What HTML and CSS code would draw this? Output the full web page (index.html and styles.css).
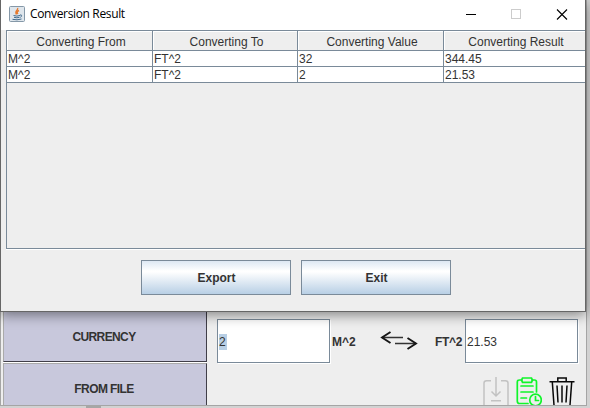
FILE: index.html
```html
<!DOCTYPE html>
<html lang="en">
<head>
<meta charset="utf-8">
<title>Conversion Result</title>
<link rel="stylesheet" href="styles.css">
</head>
<body>
<main class="app">
  <nav class="menu">
    <div class="menu-item">CURRENCY</div>
    <div class="menu-item last">FROM FILE</div>
  </nav>
  <section class="converter">
    <div class="fields">
      <div class="field"><span class="selected">2</span></div>
      <b class="unit from">M^2</b>
      <svg class="swap" width="38" height="20" viewBox="0 0 38 20" fill="none" stroke="#151515">
        <path d="M2 6.500H23M15 12.500H36" stroke-width="1.600" stroke="#333"/>
        <path d="M10.500 1L2 6.500l8.500 5.500M27.500 7L36 12.500l-8.500 5.500" stroke-width="1.900"/>
      </svg>
      <b class="unit to">FT^2</b>
      <div class="field">21.53</div>
    </div>
    <div class="tools">
      <svg width="26" height="28" viewBox="0 0 26 28" fill="none" stroke="#c2c2c2" stroke-width="1.500">
        <path d="M8 3.700H3.500Q1 3.700 1 6V28M18 3.700h4.500Q25 3.700 25 6V28M13 0V19M8.500 14.500L13 19l4.500-4.500M8 23.700H18"/>
      </svg>
      <svg width="26" height="28" viewBox="0 0 26 28" fill="none" stroke="#10f52a" stroke-width="1.700" stroke-linecap="round">
        <path d="M6 3H3.500Q1.300 3 1.300 5V24Q1.300 26.500 3.500 26.500H12M16 3h2.500Q20.500 3 20.500 5V15"/>
        <path d="M6.500 1h9l1 2-1 2.300h-9L5.500 3zM5 9H17M5 15H17M5 21h5.500"/>
        <circle cx="19.500" cy="23" r="5.800"/><path d="M19.500 19.500V23.500H22.500"/>
      </svg>
      <svg width="26" height="28" viewBox="0 0 26 28" fill="none" stroke="#080808" stroke-width="1.500">
        <path d="M0.500 4.700H25.500M8.800 4.500V1H17.200V4.500M3.300 5L5 28M22.700 5L21 28"/>
        <path d="M8 8.500L9 25.500M13 8.500V25.500M18 8.500L17 25.500"/>
      </svg>
    </div>
  </section>
</main>
<div class="thumb"></div>
<section class="dialog">
  <header class="titlebar">
    <svg class="java" width="16" height="16" viewBox="0 0 16 16" fill="none">
      <rect x=".5" y=".5" width="15" height="15" rx="1" fill="#dfe6ec" stroke="#8598a8"/>
      <path d="M8.500 2C10 4 5 5 7.500 8.500M10 4.500Q7 6 9 8" stroke="#e67a2e" stroke-width="1.400"/>
      <path d="M4.500 9.500Q8 10.700 11 9.500M5 11.300Q8 12.300 10.500 11.300M3.500 13.300Q8 14.500 12.500 13M11 9Q14 8.500 11.500 11.500" stroke="#426a8c"/>
    </svg>
    <span class="caption">Conversion Result</span>
    <svg class="controls" width="104" height="12" viewBox="0 0 104 12" fill="none">
      <path d="M0 5.500H10" stroke="#000"/>
      <rect x="45.500" y=".5" width="9" height="9" stroke="#ccc"/>
      <path d="M91 0.500L101 10.500M101 0.500L91 10.500" stroke="#000" stroke-width="1.100"/>
    </svg>
  </header>
  <div class="grid">
    <div class="row head"><span>Converting From</span><span>Converting To</span><span>Converting Value</span><span>Converting Result</span></div>
    <div class="row"><span>M^2</span><span>FT^2</span><span>32</span><span>344.45</span></div>
    <div class="row"><span>M^2</span><span>FT^2</span><span>2</span><span>21.53</span></div>
  </div>
  <footer class="actions">
    <button type="button">Export</button>
    <button type="button">Exit</button>
  </footer>
</section>
</body>
</html>
```
FILE: styles.css
```css
* { box-sizing: border-box; }
body {
  margin: 0;
  height: 408px;
  position: relative;
  overflow: hidden;
  background: #d2d2d2;
  color: #333;
  font: 12px/14px "Liberation Sans", Arial, sans-serif;
}
.app {
  display: flex;
  width: 587px;
  height: 406px;
  padding-left: 2px;
  overflow: hidden;
  background: #eee;
  border: 1px solid #a5a5a5;
}
.menu {
  width: 204px;
  padding-top: 310px;
  flex: none;
  font-weight: bold;
  letter-spacing: -.6px;
}
.menu-item {
  height: 51px;
  background: #c8c8dc;
  border-left: 1px solid #aaa;
  border-right: 1px solid #403e48;
  border-bottom: 1px solid #403e48;
  display: flex;
  align-items: center;
  justify-content: center;
  padding-right: 2px;
  padding-top: 1px;
}
.menu-item.last {
  height: 52px;
  margin-top: 1px;
  padding-top: 0;
  border-top: 1px solid #aaa;
  box-shadow: 0 -1px #fff;
}
.converter { padding: 318px 0 0 10px; }
.fields { display: flex; align-items: center; }
.field {
  width: 113px;
  height: 44px;
  flex: none;
  display: flex;
  align-items: center;
  padding: 1px 0 0 1px;
  background: #fff;
  border: 1px solid #7a8a99;
  box-shadow: 1px 1px #fff;
}
.selected { background: #b8cfe5; width: 8px; height: 16px; line-height: 16px; }
.unit { white-space: nowrap; padding-top: 1px; }
.from { width: 50px; padding-left: 2px; }
.swap { width: 38px; height: 20px; }
.to { width: 47px; padding-left: 17px; letter-spacing: -.3px; }
.tools { display: flex; gap: 7px; margin: 14px 0 0 266px; }
.thumb {
  position: absolute;
  left: 86px;
  top: 405px;
  width: 15px;
  height: 3px;
  background: #a6a6a6;
}

.dialog {
  position: absolute;
  top: 0;
  left: 0;
  width: 586px;
  height: 312px;
  background: #eee;
  border: 1px solid #666;
  border-top: 0;
  box-shadow: 0 3px 12px rgba(0, 0, 0, .45);
}
.titlebar {
  height: 30px;
  display: flex;
  align-items: flex-start;
  padding: 6px 0 0 8px;
  background: #fff;
}
.caption {
  width: 100px;
  margin-left: 5px;
  white-space: nowrap;
  color: #000;
  letter-spacing: -.35px;
  font: 12px/16px "Open Sans", sans-serif;
}
.controls { margin: 3px 0 0 336px; }
.grid {
  height: 219px;
  margin-left: 5px;
  border: 1px solid #7a8a99;
  border-right: 0;
  box-shadow: 0 1px #fff;
}
.row {
  display: grid;
  grid-template-columns: 146px 145px 146px 1fr;
  grid-template-rows: 16px;
  height: 16px;
  line-height: 17px;
}
.row span {
  padding-left: 1px;
  background: #fff;
  border-right: 1px solid #7a8a99;
  border-bottom: 1px solid #7a8a99;
}
.row span:last-child { border-right: 0; }
.row.head { height: 20px; grid-template-rows: 20px; text-align: center; }
.row.head span {
  padding: 1px 0 0 3px;
  line-height: 20px;
  background: #eee;
  box-shadow: inset 1px 1px #fff;
}
.actions {
  display: flex;
  gap: 10px;
  padding: 11px 0 0 140px;
}
.actions button {
  width: 150px;
  height: 35px;
  padding: 0 0 0 1px;
  color: #333;
  border: 1px solid #7a8a99;
  border-radius: 0;
  font: bold 12px/14px "Liberation Sans", Arial, sans-serif;
  background: linear-gradient(#dde8f3, #fff 30%, #fff 33%, #b8cfe5);
}
```
